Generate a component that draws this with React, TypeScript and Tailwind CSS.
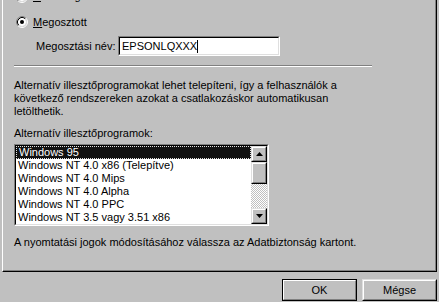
import React from "react";

const Radio: React.FC<{ checked?: boolean }> = ({ checked }) => (
  <svg width="12" height="12" viewBox="0 0 12 12" className="shrink-0">
    <path d="M2.11 9.89 A5.5 5.5 0 0 1 9.89 2.11" fill="none" stroke="#808080" />
    <path d="M9.89 2.11 A5.5 5.5 0 0 1 2.11 9.89" fill="none" stroke="#fff" />
    <circle cx="6" cy="6" r="4" fill="#fff" />
    <path d="M2.82 9.18 A4.5 4.5 0 0 1 9.18 2.82" fill="none" stroke="#000" />
    <path d="M9.18 2.82 A4.5 4.5 0 0 1 2.82 9.18" fill="none" stroke="#dfdfdf" />
    {checked && <circle cx="6" cy="6" r="2" fill="#000" />}
  </svg>
);

const Raised: React.FC<{ className?: string; children?: React.ReactNode }> = ({ className = "", children }) => (
  <div className={`border border-t-[#dfdfdf] border-l-[#dfdfdf] border-b-black border-r-black ${className}`}>
    <div className="w-full h-full border border-t-white border-l-white border-b-[#808080] border-r-[#808080] bg-[#c0c0c0] flex items-center justify-center">
      {children}
    </div>
  </div>
);

const Arrow: React.FC<{ down?: boolean }> = ({ down }) => (
  <svg width="7" height="4" viewBox="0 0 7 4">
    <path d={down ? "M0 0 H7 L3.5 4 Z" : "M3.5 0 L7 4 H0 Z"} fill="#000" />
  </svg>
);

const drivers = [
  "Windows 95",
  "Windows NT 4.0 x86 (Telepítve)",
  "Windows NT 4.0 Mips",
  "Windows NT 4.0 Alpha",
  "Windows NT 4.0 PPC",
  "Windows NT 3.5 vagy 3.51 x86",
];

export default function App() {
  return (
    <div className="w-[439px] h-[302px] overflow-hidden bg-[#c0c0c0] text-black text-[11px] leading-[13px] font-['Liberation_Sans',Arial,sans-serif]">
      <div className="ml-[2px] w-[435px] h-[272px] border-l border-l-white border-r border-r-black border-b border-b-black shadow-[inset_-1px_-1px_0_#808080] flex flex-col">
        {/* cut-off option */}
        <div className="mt-[-10px] h-[13px] ml-[13px] flex items-center gap-[5px]">
          <Radio />
          <span>
            <u>N</u>em megosztott
          </span>
        </div>

        <div className="mt-[13px] h-[13px] ml-[13px] flex items-start gap-[5px]">
          <Radio checked />
          <span>
            <u>M</u>egosztott
          </span>
        </div>

        <div className="mt-[7px] h-[20px] ml-[33px] flex items-center">
          <span className="w-[82px]">Megosztási név:</span>
          <div className="w-[162px] h-[20px] border border-t-[#808080] border-l-[#808080] border-b-white border-r-white">
            <div className="w-full h-full border border-t-black border-l-black border-b-[#dfdfdf] border-r-[#dfdfdf] bg-white pl-[2px] flex items-center">
              <span>EPSONLQXXX</span>
              <span className="w-px h-[13px] bg-black" />
            </div>
          </div>
        </div>

        <div className="mt-[9px] ml-[11px] w-[358px] h-[2px] border-t border-t-[#808080] border-b border-b-white" />

        <p className="mt-[12px] ml-[11px]">
          Alternatív illesztőprogramokat lehet telepíteni, így a felhasználók a
          <br />
          következő rendszereken azokat a csatlakozáskor automatikusan
          <br />
          letölthetik.
        </p>

        <div className="mt-[9px] ml-[11px]">Alternatív illesztőprogramok:</div>

        <div className="mt-[4px] ml-[11px] w-[255px] h-[82px] border border-t-[#808080] border-l-[#808080] border-b-white border-r-white">
          <div className="w-full h-full border border-t-black border-l-black border-b-[#dfdfdf] border-r-[#dfdfdf] bg-white flex">
            <ul className="flex-1 flex flex-col">
              {drivers.map((d, i) => (
                <li
                  key={d}
                  className={
                    i === 0
                      ? "h-[13px] pl-[2px] bg-[#111] text-white border border-dotted border-[#e0e0e0] leading-[11px]"
                      : "h-[13px] pl-[2px] whitespace-nowrap"
                  }
                >
                  {d}
                </li>
              ))}
            </ul>
            <div className="w-[16px] flex flex-col">
              <Raised className="h-[16px]">
                <Arrow />
              </Raised>
              <Raised className="h-[22px]" />
              <div className="flex-1 bg-[repeating-conic-gradient(#c0c0c0_0_25%,#ffffff_0_50%)] bg-[length:2px_2px]" />
              <Raised className="h-[16px]">
                <Arrow down />
              </Raised>
            </div>
          </div>
        </div>

        <div className="mt-[10px] ml-[11px]">
          A nyomtatási jogok módosításához válassza az Adatbiztonság kartont.
        </div>
      </div>

      <div className="mt-[7px] h-[22px] pr-[2px] flex justify-end gap-[5px]">
        <div className="w-[75px] h-[22px] border border-black">
          <div className="w-full h-full border border-t-white border-l-white border-b-[#808080] border-r-[#808080] flex items-center justify-center">
            OK
          </div>
        </div>
        <Raised className="w-[75px] h-[22px]">Mégse</Raised>
      </div>
    </div>
  );
}
